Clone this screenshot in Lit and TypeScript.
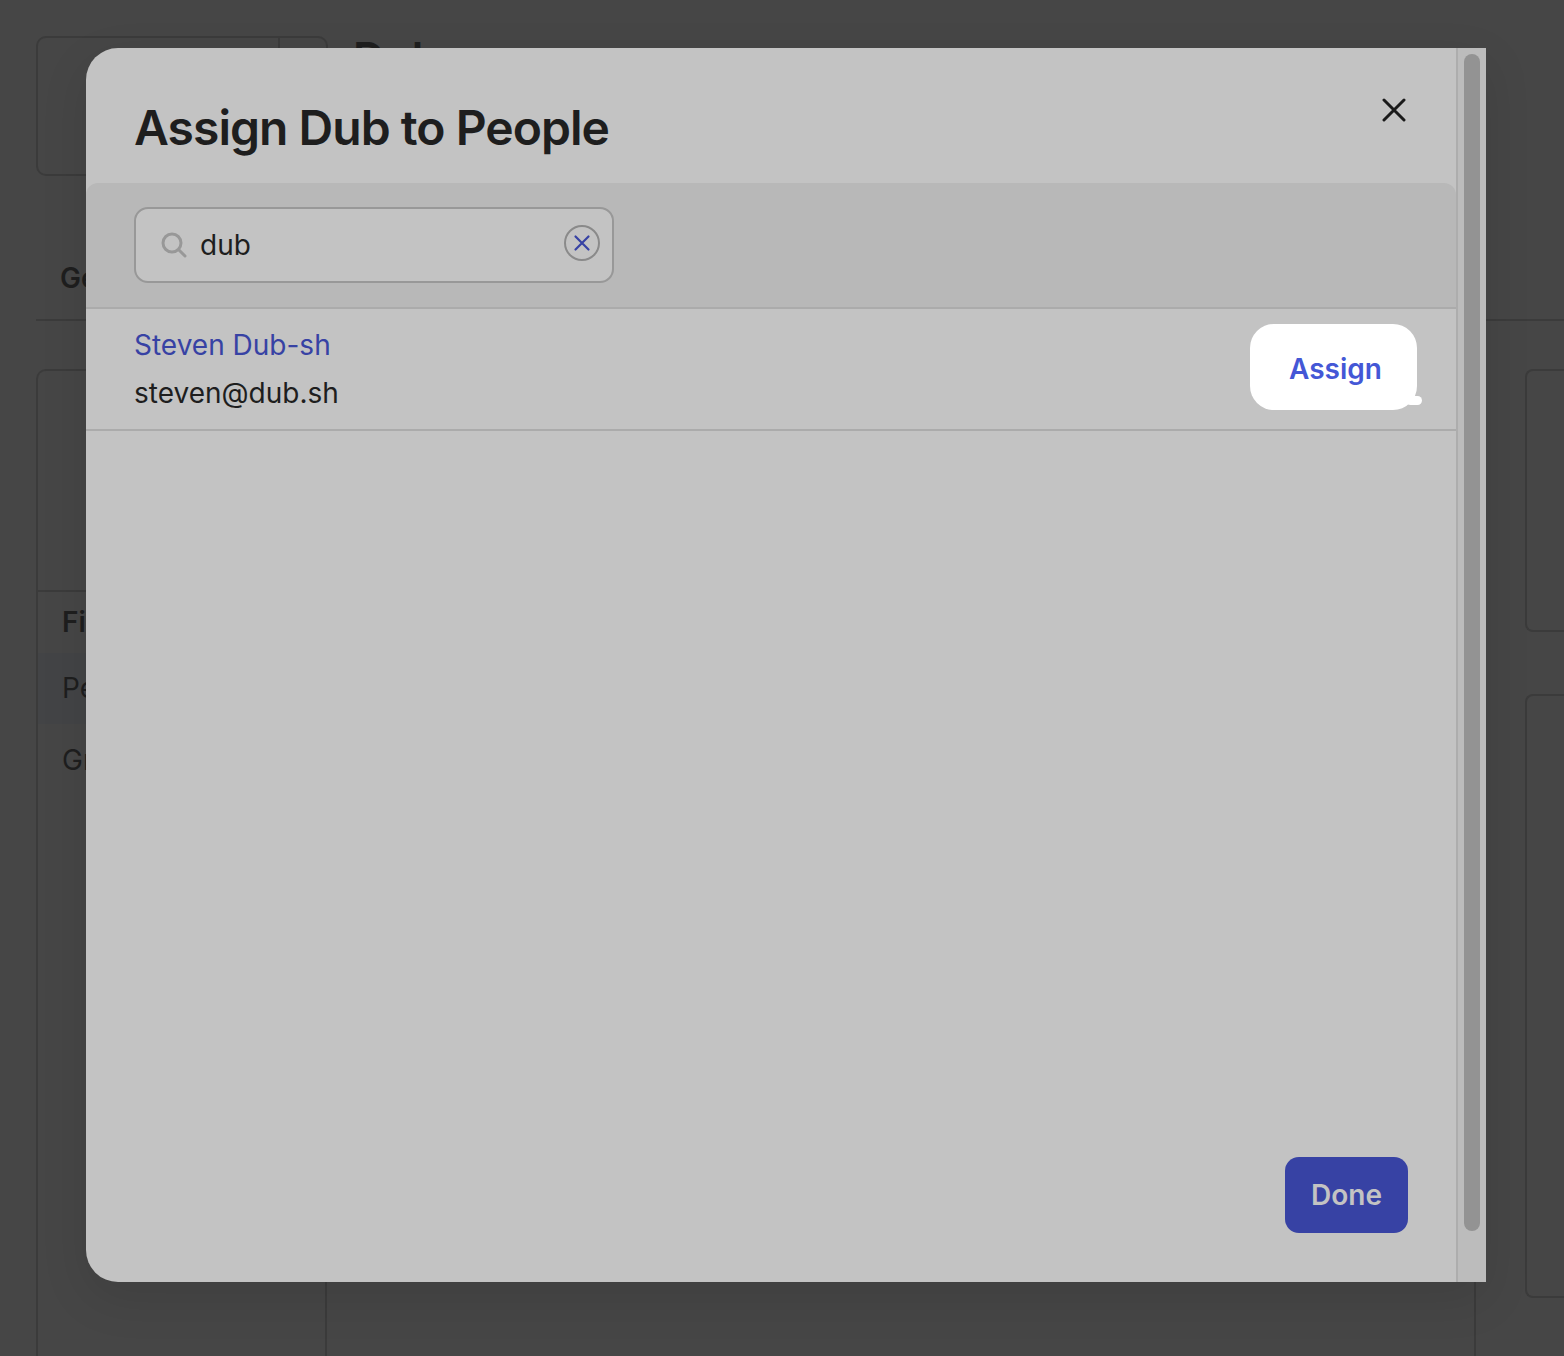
import { LitElement, html, css } from "lit";
import { customElement } from "lit/decorators.js";

@customElement("app-root")
export class AppRoot extends LitElement {
  static styles = css`
    :host { display: block; }
    * { box-sizing: border-box; }
    .page {
      position: relative; width: 1564px; height: 1356px; overflow: hidden;
      background: #464646; color: #1e1e1e;
      font-family: Inter, "Liberation Sans", sans-serif;
    }
    .top { display: flex; gap: 25px; padding: 36px 0 0 36px; }
    .logo-card {
      width: 292px; height: 140px; border: 2px solid #3b3b3b; border-radius: 10px;
      display: flex; justify-content: flex-end; flex: none;
    }
    .logo-side { width: 48px; border-left: 2px solid #3b3b3b; }
    .page-title { font-size: 44px; font-weight: 600; line-height: 44px; height: 44px; }
    .tabs {
      margin: 74px 0 0 36px; height: 71px; padding: 11px 0 0 24px;
      border-bottom: 2px solid #3b3b3b;
      font-size: 28px; font-weight: 600; line-height: 34px;
    }
    .content { display: flex; margin: 48px 0 0 36px; height: 991px; }
    .side { width: 291px; flex: none; border: 2px solid #3b3b3b; border-bottom: 0; border-radius: 10px 0 0 0; padding-top: 219px; }
    .side-row { height: 69px; padding: 0 24px; font-size: 28px; line-height: 72px; }
    .side-head { height: 63px; font-weight: 600; border-top: 2px solid #3b3b3b; line-height: 60px; }
    .side-active { height: 71px; background: #434446; line-height: 70px; }
    .mid { width: 1149px; border-right: 2px solid #3b3b3b; flex: none; }
    .rights { display: flex; flex-direction: column; gap: 62px; margin-left: 49px; flex: none; }
    .rcard { width: 60px; border: 2px solid #3b3b3b; border-right: 0; border-radius: 8px 0 0 8px; }
    .rcard.a { height: 263px; }
    .rcard.b { height: 604px; }

    .modal {
      position: absolute; left: 86px; top: 48px; width: 1400px; height: 1234px;
      display: flex; background: #c3c3c3; border-radius: 32px 0 0 32px;
      box-shadow: 0 16px 48px rgba(0, 0, 0, 0.1); overflow: hidden;
    }
    .main { flex: 1; display: flex; flex-direction: column; min-width: 0; }
    .head {
      height: 135px; flex: none; display: flex; justify-content: space-between;
      padding: 48px 48px 0 48px;
    }
    h1 { margin: 0; font-size: 48px; line-height: 64px; font-weight: 600; letter-spacing: -0.97px; color: #1e1e1e; }
    .close { width: 24px; height: 24px; margin: 2px 2px 0 0; display: block; }
    .search-band {
      height: 126px; flex: none; background: #b8b8b8; border-radius: 12px 12px 0 0;
      border-bottom: 2px solid #ababab; padding: 24px 48px;
    }
    .search {
      width: 480px; height: 76px; border: 2px solid #989898; border-radius: 14px;
      background: #c3c3c3; display: flex; align-items: center; padding: 0 12px 0 25px;
    }
    .search-ic { width: 26px; height: 26px; flex: none; }
    .q { flex: 1; margin-left: 13px; font-size: 28px; color: #1e1e1e; }
    .clear { width: 36px; height: 36px; flex: none; margin-top: -4px; }
    .row {
      height: 122px; flex: none; border-bottom: 2px solid #ababab;
      display: flex; align-items: center; justify-content: space-between;
      padding: 0 39px 1px 48px;
    }
    .who { font-size: 28px; line-height: 48px; }
    .name { color: #3742a4; }
    .mail { color: #1e1e1e; }
    .assign {
      position: relative; width: 167px; height: 86px; margin-bottom: 3px; padding: 4px 0 0 4px;
      background: #fff; border-radius: 24px;
      display: flex; align-items: center; justify-content: center;
      font-size: 28px; font-weight: 600; color: #4457d6;
    }
    .assign::after {
      content: ""; position: absolute; right: -5px; bottom: 5px; width: 16px; height: 9px;
      background: #fff; border-radius: 5px;
    }
    .grow { flex: 1; }
    .foot { display: flex; justify-content: flex-end; padding: 0 48px 49px; }
    .done {
      width: 123px; height: 76px; background: #3742a4; border-radius: 14px; color: #c3c3c3;
      display: flex; align-items: center; justify-content: center; font-size: 28px; font-weight: 600;
    }
    .gutter { width: 30px; flex: none; background: #bcbcbc; border-left: 2px solid #adadad; padding: 6px 6px 0 6px; }
    .thumb { width: 16px; height: 1177px; background: #939393; border-radius: 8px; }
  `;

  render() {
    return html`
      <div class="page">
        <div class="top">
          <div class="logo-card"><div class="logo-side"></div></div>
          <div class="page-title">Dub</div>
        </div>
        <div class="tabs">General</div>
        <div class="content">
          <div class="side">
            <div class="side-row side-head">Files</div>
            <div class="side-row side-active">People</div>
            <div class="side-row">Groups</div>
          </div>
          <div class="mid"></div>
          <div class="rights">
            <div class="rcard a"></div>
            <div class="rcard b"></div>
          </div>
        </div>

        <div class="modal">
          <div class="main">
            <div class="head">
              <h1>Assign Dub to People</h1>
              <svg class="close" viewBox="0 0 24 24" fill="none" stroke="#1a1a1a" stroke-width="3" stroke-linecap="round">
                <path d="M2 2 L22 22 M22 2 L2 22"></path>
              </svg>
            </div>
            <div class="search-band">
              <div class="search">
                <svg class="search-ic" viewBox="0 0 26 26" fill="none" stroke="#989898" stroke-width="3" stroke-linecap="round">
                  <circle cx="11" cy="11" r="9"></circle>
                  <path d="M18 18 L24 24"></path>
                </svg>
                <div class="q">dub</div>
                <svg class="clear" viewBox="0 0 36 36" fill="none">
                  <circle cx="18" cy="18" r="17" stroke="#8a8a8a" stroke-width="2"></circle>
                  <path d="M11.5 11.5 L24.5 24.5 M24.5 11.5 L11.5 24.5" stroke="#3742a4" stroke-width="2.2" stroke-linecap="round"></path>
                </svg>
              </div>
            </div>
            <div class="row">
              <div class="who">
                <div class="name">Steven Dub-sh</div>
                <div class="mail">steven@dub.sh</div>
              </div>
              <div class="assign">Assign</div>
            </div>
            <div class="grow"></div>
            <div class="foot"><div class="done">Done</div></div>
          </div>
          <div class="gutter"><div class="thumb"></div></div>
        </div>
      </div>
    `;
  }
}
